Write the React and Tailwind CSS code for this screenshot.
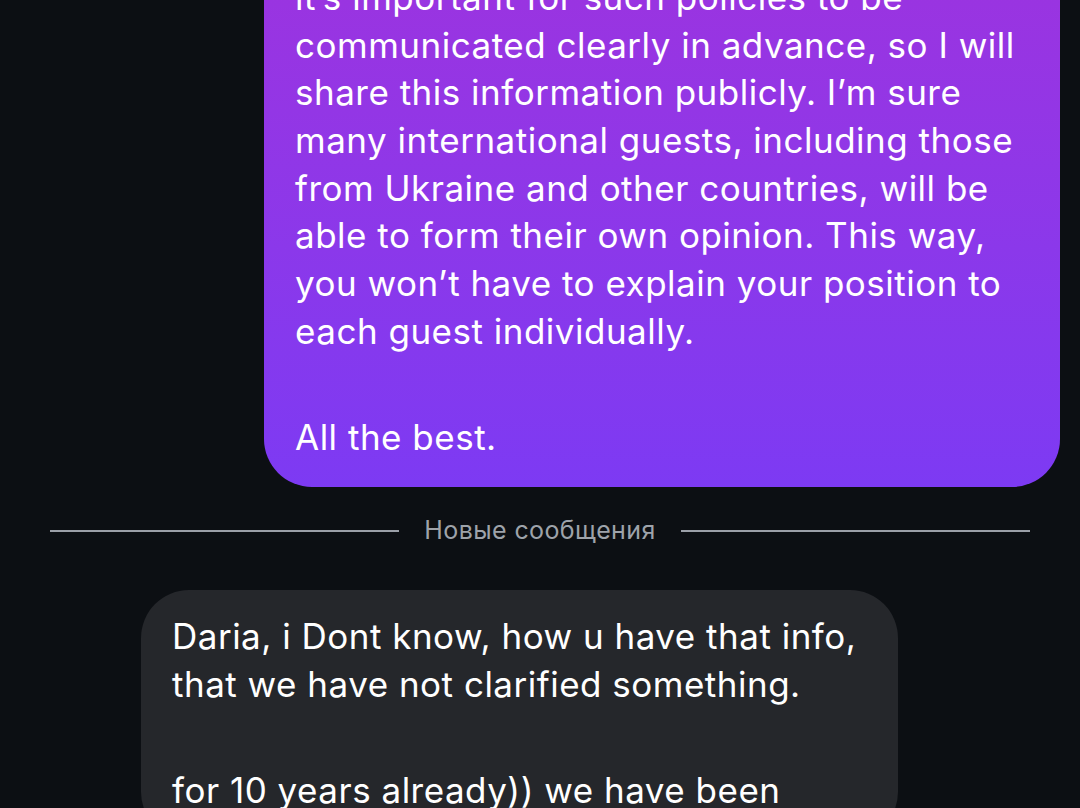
const outgoing = [
  "it’s important for such policies to be",
  "communicated clearly in advance, so I will",
  "share this information publicly. I’m sure",
  "many international guests, including those",
  "from Ukraine and other countries, will be",
  "able to form their own opinion. This way,",
  "you won’t have to explain your position to",
  "each guest individually.",
  "",
  "All the best.",
];

const incoming = [
  "Daria, i Dont know, how u have that info,",
  "that we have not clarified something.",
  "",
  "for 10 years already)) we have been",
];

function Lines({ lines }) {
  return lines.map((line, i) =>
    line ? (
      <div key={i} className="h-[47.7px] leading-[47.7px] whitespace-nowrap">
        {line}
      </div>
    ) : (
      <div key={i} className="h-[58px]" />
    )
  );
}

export default function App() {
  return (
    <div
      className="w-[1080px] h-[808px] overflow-hidden bg-[#0c0f13] text-white"
      style={{ fontFamily: "Inter, 'Noto Sans', sans-serif" }}
    >
      <div className="flex justify-end pr-[20px] -mt-[50px]">
        <div className="w-[796px] rounded-b-[48px] bg-gradient-to-b from-[#9c33df] to-[#7d3af3] pl-[31px] pt-[24px] pb-[26px] text-[35px] tracking-[0.5px]">
          <Lines lines={outgoing} />
        </div>
      </div>

      <div className="flex items-center mt-[33px] px-[50px] h-[22px]">
        <div className="flex-1 h-[2px] bg-[#9ba0a8]" />
        <div className="px-[25px] text-[25px] text-[#9ea3aa] tracking-[0.4px]">Новые сообщения</div>
        <div className="flex-1 h-[2px] bg-[#9ba0a8]" />
      </div>

      <div className="pl-[141px] mt-[48px]">
        <div className="w-[757px] rounded-[48px] bg-[#25272b] pl-[31px] pt-[23px] pb-[26px] text-[35px] tracking-[0.5px]">
          <Lines lines={incoming} />
        </div>
      </div>
    </div>
  );
}
